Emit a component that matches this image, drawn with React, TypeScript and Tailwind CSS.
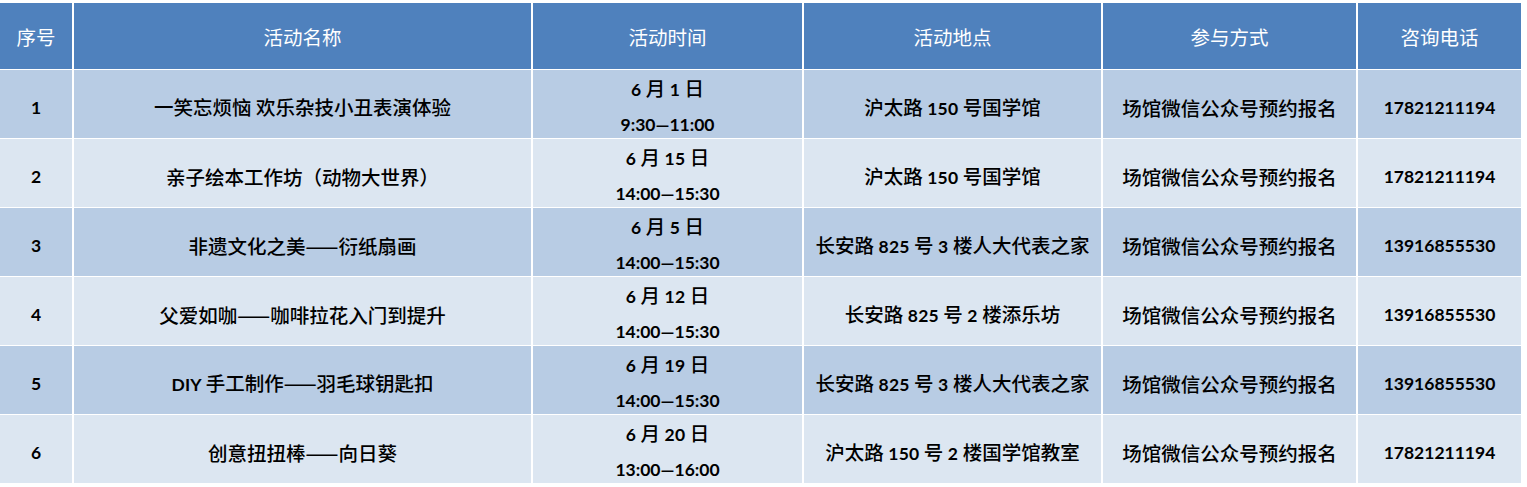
import React from "react";

type Row = [string, string, string, string, string, string, string];

const rows: Row[] = [
  ["1", "一笑忘烦恼 欢乐杂技小丑表演体验", "6 月 1 日", "9:30—11:00", "沪太路 150 号国学馆", "场馆微信公众号预约报名", "17821211194"],
  ["2", "亲子绘本工作坊（动物大世界）", "6 月 15 日", "14:00—15:30", "沪太路 150 号国学馆", "场馆微信公众号预约报名", "17821211194"],
  ["3", "非遗文化之美——衍纸扇画", "6 月 5 日", "14:00—15:30", "长安路 825 号 3 楼人大代表之家", "场馆微信公众号预约报名", "13916855530"],
  ["4", "父爱如咖——咖啡拉花入门到提升", "6 月 12 日", "14:00—15:30", "长安路 825 号 2 楼添乐坊", "场馆微信公众号预约报名", "13916855530"],
  ["5", "DIY 手工制作——羽毛球钥匙扣", "6 月 19 日", "14:00—15:30", "长安路 825 号 3 楼人大代表之家", "场馆微信公众号预约报名", "13916855530"],
  ["6", "创意扭扭棒——向日葵", "6 月 20 日", "13:00—16:00", "沪太路 150 号 2 楼国学馆教室", "场馆微信公众号预约报名", "17821211194"],
];

const headers = ["序号", "活动名称", "活动时间", "活动地点", "参与方式", "咨询电话"];

function Mixed({ text }: { text: string }) {
  const parts = text.split(/([A-Za-z0-9: ]+)/).filter((p) => p.length > 0);
  return (
    <>
      {parts.map((p, i) =>
        /^[A-Za-z0-9: ]+$/.test(p) ? (
          <span key={i} className="font-['Lato'] font-bold text-[17.5px] whitespace-pre tracking-[0.2px]">
            {p}
          </span>
        ) : (
          <span key={i} className="font-['Noto_Sans_CJK_SC'] font-medium text-[19.5px]">
            {p}
          </span>
        )
      )}
    </>
  );
}

function Latin({ text }: { text: string }) {
  return <span className="font-['Lato'] font-bold text-[17.5px] whitespace-pre">{text}</span>;
}

export default function App() {
  return (
    <div className="w-[1527px] h-[487px] bg-white pt-[3px] font-['Noto_Sans_CJK_SC',sans-serif] text-black">
      <div className="grid w-[1521px] grid-cols-[72px_457px_269px_297px_253px_163px] grid-rows-[66px_repeat(6,68px)] gap-x-[2px] gap-y-[1px] bg-white">
        {headers.map((h) => (
          <div
            key={h}
            className="flex items-center justify-center bg-[#4f81bd] pt-[2px] text-white font-['Noto_Sans_CJK_SC'] text-[19.5px] leading-none"
          >
            {h}
          </div>
        ))}
        {rows.map((r, idx) => {
          const bg = idx % 2 === 0 ? "bg-[#b8cce4]" : "bg-[#dce6f1]";
          return (
            <React.Fragment key={r[0]}>
              <div className={`${bg} flex items-center justify-center pt-[8px] leading-[30px]`}>
                <Latin text={r[0]} />
              </div>
              <div className={`${bg} flex items-center justify-center pt-[8px] leading-[30px]`}>
                <span>
                  <Mixed text={r[1]} />
                </span>
              </div>
              <div className={`${bg} flex flex-col items-center justify-center pt-[5px] leading-[34px]`}>
                <div>
                  <Mixed text={r[2]} />
                </div>
                <div>
                  <Latin text={r[3]} />
                </div>
              </div>
              <div className={`${bg} flex items-center justify-center pt-[8px] leading-[30px]`}>
                <span>
                  <Mixed text={r[4]} />
                </span>
              </div>
              <div className={`${bg} flex items-center justify-center pt-[8px] leading-[30px]`}>
                <span>
                  <Mixed text={r[5]} />
                </span>
              </div>
              <div className={`${bg} flex items-center justify-center pt-[8px] leading-[30px]`}>
                <Latin text={r[6]} />
              </div>
            </React.Fragment>
          );
        })}
      </div>
    </div>
  );
}
